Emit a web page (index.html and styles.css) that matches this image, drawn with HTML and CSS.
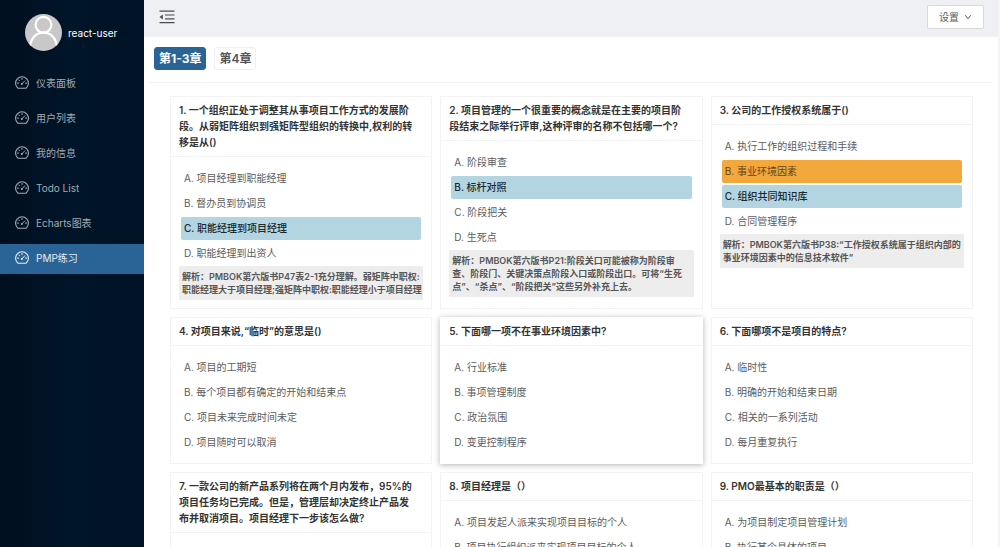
FILE: index.html
```html
<!DOCTYPE html>
<html lang="zh-CN">
<head>
<meta charset="utf-8">
<title>PMP练习</title>
<link rel="stylesheet" href="styles.css">
</head>
<body>
<svg class="sprite" aria-hidden="true">
  <symbol id="gauge" viewBox="0 0 14 14">
    <path d="M3 12.200a6.400 6.400 0 1 1 8 0z" fill="none" stroke="currentColor" stroke-width="1.100" stroke-linejoin="round"/>
    <path d="M7 2.300v1.200M2.300 7.100h1.200M10.500 7.100h1.200M3.700 3.900l.8.8M7 7.800l2.700-2.900" fill="none" stroke="currentColor" stroke-width="1" stroke-linecap="round"/>
    <circle cx="6.800" cy="8" r="1" fill="currentColor"/>
  </symbol>
</svg>
<div class="app">
  <aside class="sidebar">
    <div class="user">
      <svg class="avatar" viewBox="0 0 37 37" aria-hidden="true">
        <defs><clipPath id="round"><circle cx="18.500" cy="18.500" r="18.500"/></clipPath></defs>
        <g clip-path="url(#round)">
          <rect width="37" height="37" fill="#c8c8c8"/>
          <g fill="none" stroke="#fff" stroke-width="2.200">
            <circle cx="18.500" cy="10.800" r="7.900"/>
            <path d="M5.200 32c.8-8 6-13.300 13.300-13.300s12.500 5.300 13.300 13.300"/>
          </g>
        </g>
      </svg>
      <span>react-user</span>
    </div>
    <nav class="menu">
      <a href="#"><svg><use href="#gauge"/></svg>仪表面板</a>
      <a href="#"><svg><use href="#gauge"/></svg>用户列表</a>
      <a href="#"><svg><use href="#gauge"/></svg>我的信息</a>
      <a href="#"><svg><use href="#gauge"/></svg>Todo List</a>
      <a href="#"><svg><use href="#gauge"/></svg>Echarts图表</a>
      <a href="#" class="active"><svg><use href="#gauge"/></svg>PMP练习</a>
    </nav>
  </aside>
  <div class="page">
    <header class="topbar">
      <button class="fold" type="button" aria-label="收起菜单">
        <svg viewBox="0 0 16 14"><path d="M.5 1.200h15M6 5h9.500M6 8.900h9.500M.5 12.700h15" fill="none" stroke="currentColor" stroke-width="1.200"/><path d="M.5 7l3.300-2.500v5z" fill="currentColor"/></svg>
      </button>
      <button class="settings" type="button">设置
        <svg viewBox="0 0 8 8"><path d="M1.200 2.200L4 5.900l2.800-3.700" fill="none" stroke="currentColor"/></svg>
      </button>
    </header>
    <main class="content">
      <div class="tabs">
        <button type="button" class="tab current">第1-3章</button>
        <button type="button" class="tab">第4章</button>
      </div>
      <div class="grid">
        <section class="card">
          <h2>1. 一个组织正处于调整其从事项目工作方式的发展阶段。从弱矩阵组织到强矩阵型组织的转换中,权利的转移是从()</h2>
          <div class="body">
            <button type="button" class="option">A. 项目经理到职能经理</button>
            <button type="button" class="option">B. 督办员到协调员</button>
            <button type="button" class="option right">C. 职能经理到项目经理</button>
            <button type="button" class="option">D. 职能经理到出资人</button>
            <p class="note">解析：PMBOK第六版书P47表2-1充分理解。弱矩阵中职权:<br>职能经理大于项目经理;强矩阵中职权:职能经理小于项目经理</p>
          </div>
        </section>
        <section class="card">
          <h2>2. 项目管理的一个很重要的概念就是在主要的项目阶段结束之际举行评审,这种评审的名称不包括哪一个?</h2>
          <div class="body">
            <button type="button" class="option">A. 阶段审查</button>
            <button type="button" class="option right">B. 标杆对照</button>
            <button type="button" class="option">C. 阶段把关</button>
            <button type="button" class="option">D. 生死点</button>
            <p class="note">解析：PMBOK第六版书P21:阶段关口可能被称为阶段审<br>查、阶段门、关键决策点阶段入口或阶段出口。可将“生死<br>点”、“杀点”、“阶段把关”这些另外补充上去。</p>
          </div>
        </section>
        <section class="card">
          <h2>3. 公司的工作授权系统属于()</h2>
          <div class="body">
            <button type="button" class="option">A. 执行工作的组织过程和手续</button>
            <button type="button" class="option wrong">B. 事业环境因素</button>
            <button type="button" class="option right">C. 组织共同知识库</button>
            <button type="button" class="option">D. 合同管理程序</button>
            <p class="note">解析：PMBOK第六版书P38:“工作授权系统属于组织内部的<br>事业环境因素中的信息技术软件”</p>
          </div>
        </section>
        <section class="card">
          <h2>4. 对项目来说,“临时”的意思是()</h2>
          <div class="body">
            <button type="button" class="option">A. 项目的工期短</button>
            <button type="button" class="option">B. 每个项目都有确定的开始和结束点</button>
            <button type="button" class="option">C. 项目未来完成时间未定</button>
            <button type="button" class="option">D. 项目随时可以取消</button>
          </div>
        </section>
        <section class="card raised">
          <h2>5. 下面哪一项不在事业环境因素中?</h2>
          <div class="body">
            <button type="button" class="option">A. 行业标准</button>
            <button type="button" class="option">B. 事项管理制度</button>
            <button type="button" class="option">C. 政治氛围</button>
            <button type="button" class="option">D. 变更控制程序</button>
          </div>
        </section>
        <section class="card">
          <h2>6. 下面哪项不是项目的特点?</h2>
          <div class="body">
            <button type="button" class="option">A. 临时性</button>
            <button type="button" class="option">B. 明确的开始和结束日期</button>
            <button type="button" class="option">C. 相关的一系列活动</button>
            <button type="button" class="option">D. 每月重复执行</button>
          </div>
        </section>
        <section class="card">
          <h2>7. 一款公司的新产品系列将在两个月内发布，95%的项目任务均已完成。但是，管理层却决定终止产品发布并取消项目。项目经理下一步该怎么做?</h2>
        </section>
        <section class="card">
          <h2>8. 项目经理是（）</h2>
          <div class="body">
            <button type="button" class="option">A. 项目发起人派来实现项目目标的个人</button>
            <button type="button" class="option">B. 项目执行组织派来实现项目目标的个人</button>
          </div>
        </section>
        <section class="card">
          <h2>9. PMO最基本的职责是（）</h2>
          <div class="body">
            <button type="button" class="option">A. 为项目制定项目管理计划</button>
            <button type="button" class="option">B. 执行某个具体的项目</button>
          </div>
        </section>
      </div>
    </main>
  </div>
</div>
</body>
</html>
```
FILE: styles.css
```css
* { box-sizing: border-box; }
body {
  margin: 0;
  font: 10px/16px Inter, "Noto Sans CJK SC", sans-serif;
  color: #5c5c5c;
  background: #fff;
}
button { font: inherit; color: inherit; margin: 0; cursor: pointer; }
.sprite { position: absolute; width: 0; height: 0; }
.app { display: flex; height: 100vh; overflow: hidden; }

.sidebar {
  flex: 0 0 144px;
  background: linear-gradient(90deg, #000f1f, #001529 50%, #001225);
}
.user {
  display: flex;
  align-items: center;
  gap: 6px;
  padding: 14px 0 18px 25px;
  color: #fff;
}
.avatar { width: 37px; height: 37px; }
.menu { display: flex; flex-direction: column; gap: 5px; }
.menu a {
  display: flex;
  align-items: center;
  gap: 7px;
  height: 30px;
  padding: 0 0 2px 15px;
  color: #a3aab2;
  text-decoration: none;
}
.menu svg { width: 14px; height: 14px; }
.menu .active { background: #2a6496; color: #e4ecf3; }

.page { flex: 1; min-width: 0; border-right: 2px solid #f5f5f6; }
.topbar {
  display: flex;
  align-items: center;
  justify-content: space-between;
  height: 37px;
  padding: 0 14px 3px 15px;
  background: #eff0f4;
}
.fold { padding: 0; border: 0; background: none; color: #4c4c4c; }
.fold svg { display: block; width: 16px; height: 14px; }
.settings {
  display: flex;
  align-items: center;
  gap: 5px;
  height: 24px;
  padding: 0 11px;
  border: 1px solid #d9d9d9;
  border-radius: 2px;
  background: #fff;
}
.settings svg { width: 8px; height: 8px; }

.content { padding: 0 5px; }
.tabs {
  display: flex;
  gap: 8px;
  padding: 10px 5px 12px;
  border-bottom: 1px solid #f3f3f3;
}
.tab {
  height: 23px;
  padding: 0 4px;
  border: 1px solid #f0f0f0;
  border-radius: 3px;
  background: #fff;
  font-size: 12px;
  font-weight: 600;
  color: #555;
}
.tab.current { background: #2a6496; border-color: #2a6496; color: #fff; font-weight: 700; }

.grid {
  display: grid;
  grid-template-columns: repeat(3, 1fr);
  gap: 8px;
  padding: 13px 20px 8px 21px;
}
.card { min-width: 0; border: 1px solid #f3f3f3; background: #fff; }
.raised { border-color: #fff; box-shadow: 0 1px 6px rgba(0, 0, 0, .3); }
.card h2 {
  margin: 0;
  padding: 5px 16px 6px 8px;
  border-bottom: 1px solid #f3f3f3;
  font-size: 10px;
  line-height: 16px;
  font-weight: 600;
  color: #333;
}
.body { display: flex; flex-direction: column; gap: 2px; padding: 10px 8px 9px; }
.option {
  height: 23px;
  margin: 0 2px;
  padding: 0 3px 1px;
  border: 0;
  border-radius: 2px;
  background: none;
  text-align: left;
}
.right { background: #b3d5e2; color: #17282f; font-weight: 500; }
.wrong { background: #f2a83b; color: #61451b; }
.note {
  margin: -1px 0;
  padding: 4px 3px;
  background: #ededed;
  font-size: 9px;
  line-height: 13px;
  font-weight: 600;
  white-space: nowrap;
  color: #555;
}
```
